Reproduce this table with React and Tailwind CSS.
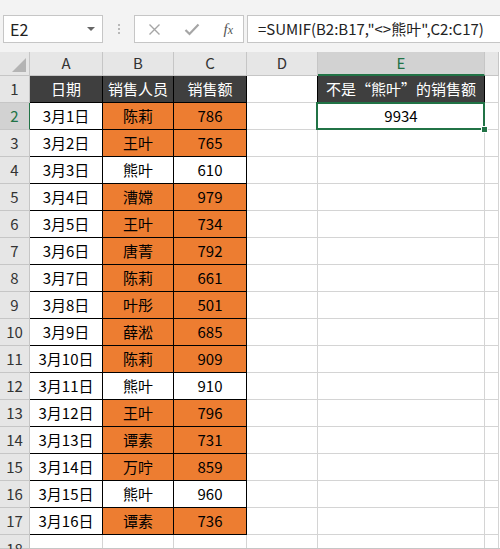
import React from "react";

const rows = [
  ["3月1日", "陈莉", 786, true],
  ["3月2日", "王叶", 765, true],
  ["3月3日", "熊叶", 610, false],
  ["3月4日", "漕嫦", 979, true],
  ["3月5日", "王叶", 734, true],
  ["3月6日", "唐菁", 792, true],
  ["3月7日", "陈莉", 661, true],
  ["3月8日", "叶彤", 501, true],
  ["3月9日", "薛淞", 685, true],
  ["3月10日", "陈莉", 909, true],
  ["3月11日", "熊叶", 910, false],
  ["3月12日", "王叶", 796, true],
  ["3月13日", "谭素", 731, true],
  ["3月14日", "万咛", 859, true],
  ["3月15日", "熊叶", 960, false],
  ["3月16日", "谭素", 736, true],
];

function RowHead({ n, active }) {
  return (
    <div
      className={
        "w-[30px] shrink-0 flex items-center justify-center border-b border-r text-[15px] " +
        (active
          ? "bg-[#d2d2d2] text-[#217346] border-b-[#c6c6c6] border-r-[#217346]"
          : "bg-[#e6e6e6] text-[#333] border-[#c6c6c6]")
      }
    >
      {n}
    </div>
  );
}

function Cell({ w, children, kind = "grid", extra = "" }) {
  const styles = {
    grid: "bg-white border-[#d4d4d4] text-black",
    white: "bg-white border-black text-black",
    orange: "bg-[#ed7d31] border-black text-black",
    dark: "bg-[#3f3f3f] border-black text-white",
  };
  return (
    <div
      className={
        "shrink-0 flex items-center justify-center border-r border-b text-[15px] " +
        w +
        " " +
        styles[kind] +
        " " +
        extra
      }
    >
      {children}
    </div>
  );
}

export default function App() {
  return (
    <div
      className="w-[500px] h-[549px] overflow-hidden bg-white select-none"
      style={{ fontFamily: '"Noto Sans CJK SC", "Noto Sans", sans-serif' }}
    >
      {/* Formula bar */}
      <div className="h-[52px] bg-[#f3f3f3] flex items-start pt-[15px] pl-[3px]">
        <div className="w-[100px] h-[28px] shrink-0 bg-white border border-[#c6c6c6] flex items-center justify-between pl-[6px] pr-[7px] text-[16px] text-[#222]">
          <span>E2</span>
          <span className="w-0 h-0 border-l-[4px] border-r-[4px] border-t-[4px] border-l-transparent border-r-transparent border-t-[#666]" />
        </div>
        <div className="w-[31px] h-[28px] shrink-0 flex flex-col items-center justify-center gap-[2px]">
          <span className="w-[2px] h-[2px] bg-[#b8b8b8]" />
          <span className="w-[2px] h-[2px] bg-[#b8b8b8]" />
          <span className="w-[2px] h-[2px] bg-[#b8b8b8]" />
        </div>
        <div className="w-[110px] h-[28px] shrink-0 bg-white border border-[#c6c6c6] flex items-center justify-between pl-[13px] pr-[10px]">
          <svg width="13" height="13" viewBox="0 0 13 13">
            <path d="M1.5 1.5L11.5 11.5M11.5 1.5L1.5 11.5" stroke="#a6a6a6" strokeWidth="1.4" />
          </svg>
          <svg width="16" height="13" viewBox="0 0 16 13">
            <path d="M1.5 7L5.5 11L14.5 1.5" stroke="#a6a6a6" strokeWidth="2.2" fill="none" />
          </svg>
          <span
            className="italic text-[15px] text-[#555] leading-none"
            style={{ fontFamily: '"Liberation Serif", "DejaVu Serif", serif' }}
          >
            f<span className="text-[12px]">x</span>
          </span>
        </div>
        <div className="ml-[3px] flex-1 h-[28px] bg-white border border-r-0 border-[#c6c6c6] flex items-center pl-[10px] text-[15px] text-[#222] whitespace-nowrap overflow-hidden">
          =SUMIF(B2:B17,"&lt;&gt;熊叶",C2:C17)
        </div>
      </div>

      {/* Column headers */}
      <div className="flex h-[24px] bg-[#e6e6e6]">
        <div className="w-[30px] shrink-0 relative border-r border-b border-[#c6c6c6]">
          <div className="absolute right-[3px] bottom-[3px] w-0 h-0 border-t-[14px] border-t-transparent border-r-[14px] border-r-[#b4b4b4]" />
        </div>
        {[
          ["A", "w-[73px]"],
          ["B", "w-[71px]"],
          ["C", "w-[73px]"],
          ["D", "w-[71px]"],
        ].map(([l, w]) => (
          <div key={l} className={w + " shrink-0 flex items-center justify-center border-r border-b border-[#c6c6c6] text-[15px] text-[#333]"}>
            {l}
          </div>
        ))}
        <div className="w-[167px] shrink-0 flex items-center justify-center bg-[#d2d2d2] border-r border-r-[#c6c6c6] border-b-2 border-b-[#217346] text-[15px] text-[#217346]">
          E
        </div>
        <div className="w-[14px] shrink-0 border-r border-b border-[#c6c6c6]" />
        <div className="flex-1 bg-white" />
      </div>

      {/* Row 1 */}
      <div className="flex h-[27px]">
        <RowHead n={1} />
        <Cell w="w-[73px]" kind="dark">日期</Cell>
        <Cell w="w-[71px]" kind="dark">销售人员</Cell>
        <Cell w="w-[73px]" kind="dark">销售额</Cell>
        <Cell w="w-[71px]" extra="border-r-black" />
        <Cell w="w-[167px]" kind="dark">不是“熊叶”的销售额</Cell>
        <Cell w="w-[14px]" />
        <div className="flex-1 bg-white" />
      </div>

      {/* Rows 2-17 */}
      {rows.map(([date, name, amount, hl], i) => (
        <div key={i} className="flex h-[27px]">
          <RowHead n={i + 2} active={i === 0} />
          <Cell w="w-[73px]" kind="white">{date}</Cell>
          <Cell w="w-[71px]" kind={hl ? "orange" : "white"}>{name}</Cell>
          <Cell w="w-[73px]" kind={hl ? "orange" : "white"}>{amount}</Cell>
          <Cell w="w-[71px]" />
          {i === 0 ? (
            <Cell w="w-[167px]" kind="white" extra="relative">
              9934
              <div className="absolute -left-[2px] -top-[1px] -right-[1px] -bottom-[1px] border-2 border-[#217346]" />
              <div className="absolute -right-[4px] -bottom-[4px] w-[7px] h-[7px] bg-[#217346] border border-white" />
            </Cell>
          ) : (
            <Cell w="w-[167px]" />
          )}
          <Cell w="w-[14px]" />
          <div className="flex-1 bg-white" />
        </div>
      ))}

      {/* Row 18 (partial) */}
      <div className="flex h-[14px] border-b border-[#c6c6c6]">
        <div className="w-[30px] shrink-0 bg-[#e6e6e6] border-r border-[#c6c6c6] flex justify-center text-[15px] text-[#333] leading-[27px]">
          18
        </div>
        <Cell w="w-[73px]" extra="border-b-0" />
        <Cell w="w-[71px]" extra="border-b-0" />
        <Cell w="w-[73px]" extra="border-b-0" />
        <Cell w="w-[71px]" extra="border-b-0" />
        <Cell w="w-[167px]" extra="border-b-0" />
        <Cell w="w-[14px]" extra="border-b-0" />
      </div>
    </div>
  );
}
